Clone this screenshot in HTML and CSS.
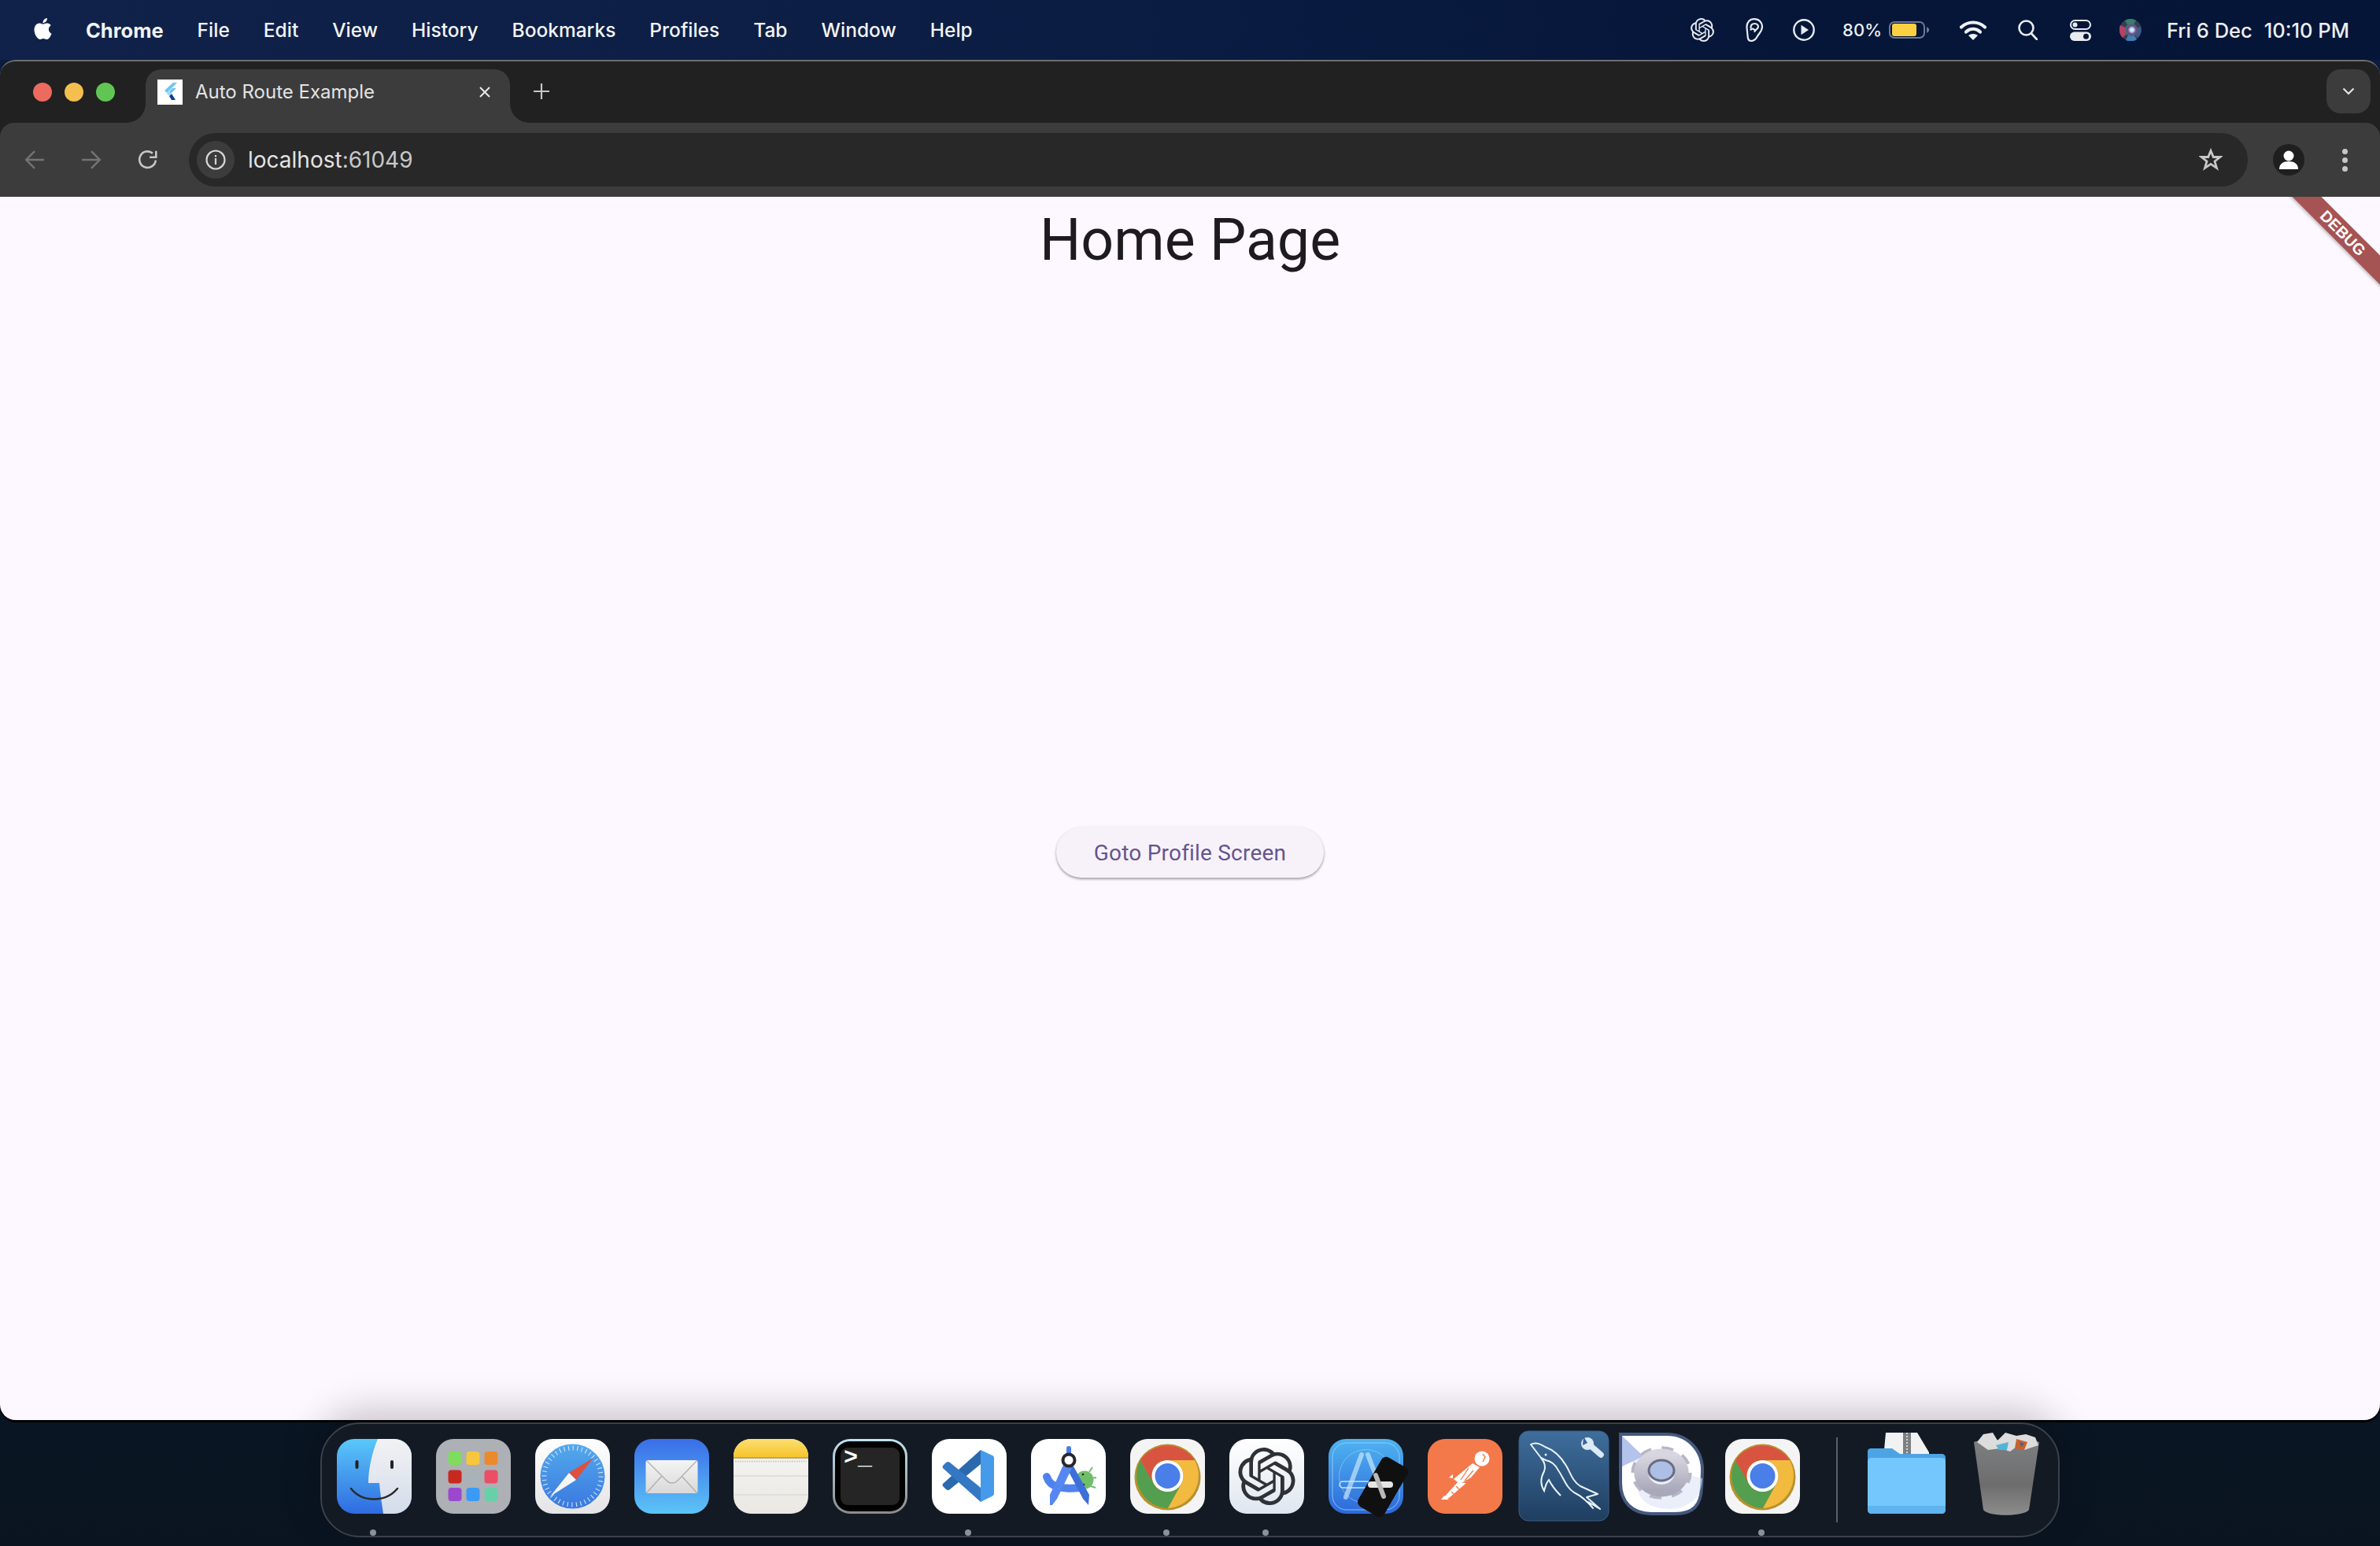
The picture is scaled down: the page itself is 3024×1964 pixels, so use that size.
FILE: index.html
```html
<!DOCTYPE html>
<html lang="en">
<head>
<meta charset="utf-8">
<title>Auto Route Example</title>
<link rel="stylesheet" href="styles.css">
</head>
<body>
<svg class="defs" width="0" height="0" aria-hidden="true">
  <defs>
    <path id="openai" d="M22.2819 9.8211a5.9847 5.9847 0 0 0-.5157-4.9108 6.0462 6.0462 0 0 0-6.5098-2.9A6.0651 6.0651 0 0 0 4.9807 4.1818a5.9847 5.9847 0 0 0-3.9977 2.9 6.0462 6.0462 0 0 0 .7427 7.0966 5.98 5.98 0 0 0 .511 4.9107 6.051 6.051 0 0 0 6.5146 2.9001A5.9847 5.9847 0 0 0 13.2599 24a6.0557 6.0557 0 0 0 5.7718-4.2058 5.9894 5.9894 0 0 0 3.9977-2.9001 6.0557 6.0557 0 0 0-.7475-7.0729zm-9.022 12.6081a4.4755 4.4755 0 0 1-2.8764-1.0408l.1419-.0804 4.7783-2.7582a.7948.7948 0 0 0 .3927-.6813v-6.7369l2.02 1.1686a.071.071 0 0 1 .038.052v5.5826a4.504 4.504 0 0 1-4.4945 4.4944zm-9.6607-4.1254a4.4708 4.4708 0 0 1-.5346-3.0137l.142.0852 4.783 2.7582a.7712.7712 0 0 0 .7806 0l5.8428-3.3685v2.3324a.0804.0804 0 0 1-.0332.0615L9.74 19.9502a4.4992 4.4992 0 0 1-6.1408-1.6464zM2.3408 7.8956a4.485 4.485 0 0 1 2.3655-1.9728V11.6a.7664.7664 0 0 0 .3879.6765l5.8144 3.3543-2.0201 1.1685a.0757.0757 0 0 1-.071 0l-4.8303-2.7865A4.504 4.504 0 0 1 2.3408 7.872zm16.5963 3.8558L13.1038 8.364 15.1192 7.2a.0757.0757 0 0 1 .071 0l4.8303 2.7913a4.4944 4.4944 0 0 1-.6765 8.1042v-5.6772a.79.79 0 0 0-.407-.667zm2.0107-3.0231l-.142-.0852-4.7735-2.7818a.7759.7759 0 0 0-.7854 0L9.409 9.2297V6.8974a.0662.0662 0 0 1 .0284-.0615l4.8303-2.7866a4.4992 4.4992 0 0 1 6.6802 4.66zM8.3065 12.863l-2.02-1.1638a.0804.0804 0 0 1-.038-.0567V6.0742a4.4992 4.4992 0 0 1 7.3757-3.4537l-.142.0805L8.704 5.459a.7948.7948 0 0 0-.3927.6813zm1.0976-2.3654l2.602-1.4998 2.6069 1.4998v2.9994l-2.5974 1.4997-2.6067-1.4997Z"/>
    <g id="chrome-mark">
      <rect width="95" height="95" rx="22" fill="#f4f4f4"/>
      <circle cx="47.5" cy="48.5" r="42" fill="#b9912c"/>
      <path d="M13 27A41.500 41.500 0 0 0 48 88L65 57A20 20 0 0 1 29 55Z" fill="#549e50"/>
      <path d="M13 27A41.500 41.500 0 0 1 82 27H47.500A20 20 0 0 0 29 55Z" fill="#d85440"/>
      <path d="M82 27A41.500 41.500 0 0 1 48 88L65 57A20 20 0 0 0 47.500 27Z" fill="#f3ba40"/>
      <circle cx="47.500" cy="47" r="20" fill="#fff"/>
      <circle cx="47.500" cy="47" r="16" fill="#4a7ee8"/>
    </g>
    <linearGradient id="finder-blue" x1="0" y1="0" x2="0" y2="1"><stop offset="0" stop-color="#5ac8fa"/><stop offset="1" stop-color="#2f6be0"/></linearGradient>
    <linearGradient id="finder-light" x1="0" y1="0" x2="0" y2="1"><stop offset="0" stop-color="#f2f2f4"/><stop offset="1" stop-color="#d3dcea"/></linearGradient>
    <linearGradient id="mail-bg" x1="0" y1="0" x2="0" y2="1"><stop offset="0" stop-color="#3a6de8"/><stop offset="1" stop-color="#5cc4f7"/></linearGradient>
    <linearGradient id="mail-env" x1="0" y1="0" x2="0" y2="1"><stop offset="0" stop-color="#f4f4f3"/><stop offset="1" stop-color="#d9d9da"/></linearGradient>
    <linearGradient id="safari-bg" x1="0" y1="0" x2="0" y2="1"><stop offset="0" stop-color="#fff"/><stop offset="1" stop-color="#e4e4e6"/></linearGradient>
    <linearGradient id="safari-dial" x1="0" y1="0" x2="0" y2="1"><stop offset="0" stop-color="#53a9ec"/><stop offset="1" stop-color="#3a78df"/></linearGradient>
    <linearGradient id="notes-top" x1="0" y1="0" x2="0" y2="1"><stop offset="0" stop-color="#fbdf72"/><stop offset="1" stop-color="#f7c42c"/></linearGradient>
    <linearGradient id="notes-body" x1="0" y1="0" x2="0" y2="1"><stop offset="0" stop-color="#f7f6f3"/><stop offset="1" stop-color="#e9e8e3"/></linearGradient>
    <linearGradient id="term-rim" x1="0" y1="0" x2="0" y2="1"><stop offset="0" stop-color="#bfe3ef"/><stop offset="1" stop-color="#8b8b8b"/></linearGradient>
    <linearGradient id="oai-bg" x1="0" y1="0" x2="0" y2="1"><stop offset="0" stop-color="#fff"/><stop offset="1" stop-color="#dfe6f0"/></linearGradient>
    <linearGradient id="xc-bg" x1="0" y1="0" x2="0" y2="1"><stop offset="0" stop-color="#4fb3f1"/><stop offset="1" stop-color="#2d69da"/></linearGradient>
    <linearGradient id="sql-bg" x1="0" y1="0" x2="0" y2="1"><stop offset="0" stop-color="#3f6e9d"/><stop offset="1" stop-color="#1f3e60"/></linearGradient>
    <linearGradient id="trash-bg" x1="0" y1="0" x2="0" y2="1"><stop offset="0" stop-color="#7d7f80"/><stop offset=".6" stop-color="#6d6d6e"/><stop offset="1" stop-color="#8d8d8d"/></linearGradient>
    <linearGradient id="gear-bg" x1="0" y1="0" x2="0" y2="1"><stop offset="0" stop-color="#d8d7e0"/><stop offset="1" stop-color="#a9a8ba"/></linearGradient>
    <radialGradient id="siri-glow" cx=".55" cy=".5" r=".55"><stop offset="0" stop-color="#fff"/><stop offset=".3" stop-color="#9fd8e8"/><stop offset=".6" stop-color="#7b3f86"/><stop offset="1" stop-color="#2d7f7a"/></radialGradient>
  </defs>
</svg>

<header class="menubar">
  <svg class="apple" viewBox="0 0 24 24"><path fill="#fff" d="M12.152 6.896c-.948 0-2.415-1.078-3.96-1.04-2.04.027-3.91 1.183-4.961 3.014-2.117 3.675-.546 9.103 1.519 12.09 1.013 1.454 2.208 3.09 3.792 3.039 1.52-.065 2.09-.987 3.935-.987 1.831 0 2.35.987 3.96.948 1.637-.026 2.676-1.48 3.676-2.948 1.156-1.688 1.636-3.325 1.662-3.415-.039-.013-3.182-1.221-3.22-4.857-.026-3.04 2.48-4.494 2.597-4.559-1.429-2.09-3.623-2.324-4.39-2.376-2-.156-3.675 1.09-4.61 1.09zM15.53 3.83c.843-1.012 1.4-2.427 1.245-3.83-1.207.052-2.662.805-3.532 1.818-.78.896-1.454 2.338-1.273 3.714 1.338.104 2.715-.688 3.559-1.701"/></svg>
  <nav class="menu">
    <span class="menu-app">Chrome</span><span>File</span><span>Edit</span><span>View</span><span>History</span><span>Bookmarks</span><span>Profiles</span><span>Tab</span><span>Window</span><span>Help</span>
  </nav>
  <div class="status">
    <svg class="st-openai" viewBox="0 0 24 24"><use href="#openai" fill="#e8ebf0"/></svg>
    <svg class="st-ear" viewBox="0 0 22 30" fill="none" stroke="#e8ebf0" stroke-width="2.200" stroke-linecap="round"><path d="M1.500 12C1 5 5.500 1.100 11 1.100 17 1.100 21 5.500 21 11 21 17 17 19 15 23 13 27 10.500 29 7 29 4 29 2.500 26 2.500 22Z"/><path d="M6.500 12c0-3 2-5 5-5s4.500 2 4.500 4c0 3-3.500 3-4.500 6M6.500 14.500c2-1.500 5-1 5 1.500"/></svg>
    <svg class="st-play" viewBox="0 0 28 28"><circle cx="14" cy="14" r="12.700" fill="none" stroke="#e8ebf0" stroke-width="2.400"/><path d="M10.500 7.800 20 14l-9.500 6.200Z" fill="#e8ebf0"/></svg>
    <span class="st-pct">80%</span>
    <svg class="st-batt" viewBox="0 0 52 22"><rect x="1" y="1" width="44" height="20" rx="6" fill="none" stroke="#6d7993" stroke-width="2"/><rect x="4" y="3" width="31" height="16" rx="3" fill="#fbd043"/><path d="M48 7l3 2.500v3L48 15Z" fill="#6d7993"/></svg>
    <svg class="st-wifi" viewBox="0 0 34 25"><path d="M2 8.500C10.500 0.500 23.500 0.500 32 8.500" fill="none" stroke="#eef0f3" stroke-width="4.200" stroke-linecap="round"/><path d="M8 14.500c5.500-4.800 12.500-4.800 18 0" fill="none" stroke="#eef0f3" stroke-width="4.200" stroke-linecap="round"/><path d="M17 25l-6-6c3.500-2.800 8.500-2.800 12 0Z" fill="#eef0f3"/></svg>
    <svg class="st-search" viewBox="0 0 25 26" fill="none" stroke="#e8ebf0" stroke-width="2.600" stroke-linecap="round"><circle cx="10.500" cy="10.500" r="9"/><path d="M17 17.500 24 25"/></svg>
    <svg class="st-ctrl" viewBox="0 0 27 27"><rect x="1" y="1" width="25" height="11" rx="5.500" fill="none" stroke="#e8ebf0" stroke-width="2"/><circle cx="6.500" cy="6.500" r="3" fill="#e8ebf0"/><rect y="15.500" width="27" height="11.500" rx="5.700" fill="#e8ebf0"/><circle cx="20.500" cy="21.200" r="3.500" fill="#06163a"/></svg>
    <svg class="st-siri" viewBox="0 0 28 28"><circle cx="14" cy="14" r="14" fill="#333f52"/><path d="M14 14 1 8a14 14 0 0 0 3 16Z" fill="#b34263"/><path d="M14 14 8 27a14 14 0 0 0 14-1Z" fill="#3f7fb4"/><path d="M14 14 7 2a14 14 0 0 1 14 0Z" fill="#3a7d6e"/><path d="M14 14 27 10a14 14 0 0 1-4 14Z" fill="#3d5a8c"/><circle cx="15" cy="14" r="8" fill="url(#siri-glow)"/></svg>
    <time class="st-clock"><span>Fri 6 Dec</span><span>10:10 PM</span></time>
  </div>
</header>

<section class="window">
  <div class="tabstrip">
    <div class="lights"><i class="light red"></i><i class="light amber"></i><i class="light green"></i></div>
    <div class="tab">
      <svg class="favicon" viewBox="0 0 32 32"><rect width="32" height="32" fill="#fff"/><path d="M20 4h5L12 17l-3-3Z" fill="#6cc4f5"/><path d="M12 18l7-7h5L15 20Z" fill="#6cc4f5"/><path d="M15 21l3-3 5 8h-5Z" fill="#0b3d91"/><path d="M12 18l3-3 3 3-3 3Z" fill="#9fd8f8"/></svg>
      <span class="tab-title">Auto Route Example</span>
      <svg class="tab-close" viewBox="0 0 16 16" fill="none" stroke="#e3e3e3" stroke-width="2.200"><path d="M2 2l12 12M14 2 2 14"/></svg>
    </div>
    <svg class="new-tab" viewBox="0 0 20 20" fill="none" stroke="#c7c7c7" stroke-width="2.200"><path d="M10 0v20M0 10h20"/></svg>
    <button class="tab-search" type="button" aria-label="Search tabs"><svg viewBox="0 0 16 10" fill="none" stroke="#e3e3e3" stroke-width="2.200"><path d="M1.500 1.500 8 8l6.500-6.500"/></svg></button>
  </div>
  <div class="toolbar">
    <div class="nav">
      <span class="nav-btn"><svg viewBox="0 0 24 24" fill="none" stroke="#747474" stroke-width="2.200"><path d="M23 12H2M12 2 2 12l10 10"/></svg></span>
      <span class="nav-btn"><svg viewBox="0 0 24 24" fill="none" stroke="#747474" stroke-width="2.200"><path d="M1 12h21M12 2l10 10-10 10"/></svg></span>
      <span class="nav-btn"><svg viewBox="0 0 24 24" fill="none" stroke="#c7c7c7" stroke-width="2.400"><path d="M21 12.500A9.500 9.500 0 1 1 17.500 4.300"/><path d="M21.500 1.500v7.500H14" /></svg></span>
    </div>
    <div class="address">
      <span class="info"><svg viewBox="0 0 26 26"><circle cx="13" cy="13" r="11.500" fill="none" stroke="#d6d6d6" stroke-width="2.200"/><rect x="11.900" y="11" width="2.200" height="8" fill="#d6d6d6"/><rect x="11.900" y="7" width="2.200" height="2.400" fill="#d6d6d6"/></svg></span>
      <span class="url">localhost<span class="url-port">:61049</span></span>
      <svg class="star" viewBox="0 0 30 30" fill="none" stroke="#c7c7c7" stroke-width="2.800" stroke-linejoin="miter"><path d="M15 3.500l3.300 8h8.500l-6.800 5.400 2.500 8.500L15 20.400l-7.500 5 2.500-8.500-6.800-5.400h8.500Z"/></svg>
    </div>
    <span class="avatar"><svg viewBox="0 0 40 40"><circle cx="20" cy="20" r="20" fill="#1f1f1f"/><circle cx="20" cy="15" r="6.500" fill="#fff"/><path d="M8 32c0-7 5-10 12-10s12 3 12 10Z" fill="#fff"/></svg></span>
    <span class="kebab"><i></i><i></i><i></i></span>
  </div>
  <main class="content">
    <div class="appbar"><h1 class="page-title">Home Page</h1></div>
    <div class="page-body"><button class="elevated" type="button">Goto Profile Screen</button></div>
    <div class="debug-banner"><span>DEBUG</span></div>
  </main>
</section>

<footer class="dock">
  <div class="dock-item"><svg class="ic" viewBox="0 0 95 95"><rect width="95" height="95" rx="22" fill="url(#finder-blue)"/><path d="M52 0H73A22 22 0 0 1 95 22V73A22 22 0 0 1 73 95H59C57 82 55 68 54 56H40C40 36 46 14 52 0Z" fill="url(#finder-light)"/><rect x="23.500" y="27" width="4" height="11" rx="2" fill="#222"/><rect x="68" y="27" width="4" height="11" rx="2" fill="#222"/><path d="M18 63C32 81 62 81 77 63" fill="none" stroke="#2a2a2a" stroke-width="2.500" stroke-linecap="round"/></svg><i class="dot"></i></div>

  <div class="dock-item"><svg class="ic" viewBox="0 0 95 95"><rect width="95" height="95" rx="22" fill="#adb0b5"/><rect x="15.500" y="16" width="17" height="17" rx="4" fill="#7fdc5c"/><rect x="38.500" y="16" width="17" height="17" rx="4" fill="#f8c63c"/><rect x="61.500" y="16" width="17" height="17" rx="4" fill="#ea8a2c"/><rect x="15.500" y="39.500" width="17" height="17" rx="4" fill="#c8291e"/><rect x="38.500" y="39.500" width="17" height="17" rx="4" fill="#a9b2b8"/><rect x="61.500" y="39.500" width="17" height="17" rx="4" fill="#ea4f66"/><rect x="15.500" y="62" width="17" height="17" rx="4" fill="#9b48cf"/><rect x="38.500" y="62" width="17" height="17" rx="4" fill="#3a9af5"/><rect x="61.500" y="62" width="17" height="17" rx="4" fill="#68d0a8"/></svg></div>

  <div class="dock-item"><svg class="ic" viewBox="0 0 95 95"><rect width="95" height="95" rx="22" fill="url(#safari-bg)"/><circle cx="47.500" cy="47.500" r="41" fill="url(#safari-dial)"/><circle cx="47.500" cy="47.500" r="36" fill="none" stroke="#d8ecfb" stroke-width="6" stroke-dasharray="1.200 4.450" opacity=".85"/><path d="M43 43 74 24 52 52Z" fill="#e04e3c"/><path d="M43 43 52 52 19 73Z" fill="#f5f5f5"/></svg></div>

  <div class="dock-item"><svg class="ic" viewBox="0 0 95 95"><rect width="95" height="95" rx="22" fill="url(#mail-bg)"/><rect x="14.500" y="27" width="66" height="42" rx="3" fill="url(#mail-env)"/><path d="M16 28 41 53c4 4 10 4 14 0L79 28M16 68 35 47M79 68 60 47" fill="none" stroke="#b0b0b2" stroke-width="1.400"/></svg></div>

  <div class="dock-item"><svg class="ic" viewBox="0 0 95 95"><defs><clipPath id="notes-clip"><rect width="95" height="95" rx="22"/></clipPath></defs><g clip-path="url(#notes-clip)"><rect width="95" height="95" fill="url(#notes-body)"/><rect width="95" height="23" fill="url(#notes-top)"/><rect y="23" width="95" height="2" fill="#b5a77a"/><path d="M2 28.500H93" stroke="#c9c7c2" stroke-width="2" stroke-dasharray="1.500 1.500"/><path d="M0 47H95M0 71H95" stroke="#dbdad5" stroke-width="1.500"/></g></svg></div>

  <div class="dock-item"><svg class="ic" viewBox="0 0 95 95"><rect width="95" height="95" rx="22" fill="url(#term-rim)"/><rect x="3" y="3" width="89" height="89" rx="19" fill="#020202"/><rect x="10" y="11" width="75" height="73" rx="9" fill="#252525"/><text class="term-text" x="14" y="32">&gt;_</text></svg></div>

  <div class="dock-item"><svg class="ic" viewBox="0 0 95 95"><rect width="95" height="95" rx="22" fill="#fff"/><path d="M62 14 15 56c-2 2-2 3 0 5l3 3c2 1.500 3 1.500 5 0l39-32Z" fill="#2b69ae"/><path d="M62 62 23 30c-2-1.500-3-1.500-5 0l-3 3c-2 2-2 3 0 5l47 42Z" fill="#3478c3"/><path d="M62 14 77 21c1.500 1 2 2 2 3.500V69c0 1.500-.5 2.500-2 3.500L62 80Z" fill="#459be9"/></svg><i class="dot"></i></div>

  <div class="dock-item"><svg class="ic" viewBox="0 0 95 95"><rect width="95" height="95" rx="22" fill="#fff"/><path d="M74 42l4-6M77 50l6-1M76 60l6 2" stroke="#6fbf6a" stroke-width="2"/><circle cx="68" cy="52" r="11.500" fill="#6fbf6a"/><circle cx="66" cy="45" r="1.300" fill="#222"/><circle cx="67" cy="58" r="1.300" fill="#222"/><path d="M20 48C24 62 40 64 62 62" fill="none" stroke="#4f82ec" stroke-width="10" stroke-linecap="round"/><path d="M45 36 53 33 74 71 73 84 66 76Z" fill="#3e6fd8"/><path d="M41 33 52 37 33 76 27 84 24 84 24 71Z" fill="#5587f0"/><rect x="45" y="9" width="6" height="14" rx="3" fill="#4a7ee8"/><circle cx="48" cy="27" r="7.500" fill="#fff" stroke="#27272b" stroke-width="4"/></svg></div>

  <div class="dock-item"><svg class="ic" viewBox="0 0 95 95"><use href="#chrome-mark"/></svg><i class="dot"></i></div>

  <div class="dock-item"><svg class="ic" viewBox="0 0 95 95"><rect width="95" height="95" rx="22" fill="url(#oai-bg)"/><svg x="11" y="11" width="73" height="73" viewBox="0 0 24 24"><use href="#openai" fill="#2e3236"/></svg></svg><i class="dot"></i></div>

  <div class="dock-item"><svg class="ic" viewBox="0 0 95 95"><rect width="95" height="95" rx="22" fill="url(#xc-bg)"/><rect x="5" y="5" width="85" height="85" rx="18" fill="none" stroke="#9ed4f7" stroke-width=".8"/><circle cx="47.500" cy="47.500" r="34" fill="none" stroke="#9ed4f7" stroke-width=".6"/><path d="M42 20 22 74M50 20l19 50" fill="none" stroke="#c6e6fb" stroke-width="6" stroke-linecap="round" opacity=".7"/><rect x="14" y="54" width="50" height="8" rx="4" fill="none" stroke="#c6e6fb" stroke-width="1.500"/><rect x="50" y="25" width="38" height="72" rx="7" fill="#101010" transform="rotate(30 69 61)"/><rect x="50" y="54" width="32" height="8" rx="4" fill="#e6e6e6"/><path d="M60 46 70 73" stroke="#b9b9b9" stroke-width="6" stroke-linecap="round"/></svg></div>

  <div class="dock-item"><svg class="ic" viewBox="0 0 95 95"><rect width="95" height="95" rx="22" fill="#f3794a"/><circle cx="69" cy="25" r="9.500" fill="#fff"/><path d="M70 19l3 4-3 6" fill="none" stroke="#f3794a" stroke-width="1.500"/><path d="M57 31 66 36 55 49 41 57 33 51Z" fill="#fff"/><path d="M52 37 42 52M58 40 47 53" stroke="#f3794a" stroke-width="1.300"/><path d="M49 56 27 75 19 76 38 55Z" fill="#fff"/><path d="M36 60l5 5M30 67l4 4" stroke="#f3794a" stroke-width="1.300"/><path d="M21 72l6 5H17Z" fill="#fff"/><path d="M32 50l-5-1 5-4Z" fill="#fff"/></svg></div>

  <div class="dock-item"><svg class="ic" viewBox="0 0 95 95"><rect x="-10" y="-10" width="114" height="114" rx="12" fill="url(#sql-bg)" stroke="#3a5f86" stroke-width="1"/><path d="M5 7C12 3 20 8 23 10 34 14 43 22 50 34 55 42 58 54 68 60L90 70 76 74 93 89 78 80 84 88C76 78 68 72 60 68 50 62 47 50 40 40 36 32 30 28 24 27L18 24 5 7Z" fill="none" stroke="#e9f2f8" stroke-width="2" stroke-linejoin="round"/><path d="M18 24C23 30 24 36 22 41 17 50 17 58 22 66 24 58 26 54 28 52 32 60 37 66 43 72" fill="none" stroke="#e9f2f8" stroke-width="2"/><circle cx="24" cy="20" r="1.500" fill="#e9f2f8"/><path d="M79 7 94 20" fill="none" stroke="#dbeaf5" stroke-width="7.500" stroke-linecap="round"/><circle cx="77" cy="6" r="8" fill="#dbeaf5"/><path d="M72-3 77 5 71 8Z" fill="#3a6592"/></svg></div>

  <div class="dock-item"><svg class="ic" viewBox="0 0 95 95"><path d="M-7-6H52C78-6 98 14 97 42L96 62C95 84 86 95 62 95H32C8 95-7 80-7 56Z" fill="#fff" stroke="#45587e" stroke-width="4"/><path d="M-5-2 26 33 97 50C96 68 90 84 60 89 20 90 10 70 15 45Z" fill="#dde5f7" opacity=".6"/><path d="M-5-4V35L22 22Z" fill="#b3c3ec"/><g transform="translate(45 43) scale(1.120 .980)"><circle r="29" fill="none" stroke="#b7b6c6" stroke-width="11" stroke-dasharray="12 10.780"/><circle r="23" fill="none" stroke="url(#gear-bg)" stroke-width="16"/></g><ellipse cx="45" cy="40" rx="16" ry="13" fill="#aebfe6" stroke="#6b6c82" stroke-width="3"/></svg></div>

  <div class="dock-item"><svg class="ic" viewBox="0 0 95 95"><use href="#chrome-mark"/></svg><i class="dot"></i></div>

  <span class="dock-sep"></span>

  <div class="dock-item"><svg class="ic" viewBox="0 0 95 95"><path d="M20-8H60L75 17V25H17Z" fill="#f2f2f2"/><rect x="42" y="-8" width="10" height="36" fill="#7d7f82"/><path d="M47-8V28" stroke="#d4d5d6" stroke-width="2" stroke-dasharray="2 2"/><path d="M-3 16C-3 13-1 12 2 12H28L38 19H91C94 19 96 21 96 24V40H-3Z" fill="#4ca4e4"/><rect x="-3" y="24" width="99" height="71" rx="5" fill="#74c7fc"/><path d="M-3 85H96V90C96 93 94 95 91 95H2C-1 95-3 93-3 90Z" fill="#5fb4ee"/></svg></div>

  <div class="dock-item"><svg class="ic" viewBox="0 0 95 95"><path d="M6 4C14 0 80 0 89 4L76 90C70 99 24 99 18 90Z" fill="url(#trash-bg)"/><path d="M10 4 18-6 30-8 36 2 46-8 60-4 72-6 84-2 88 8 70 14 60 10 52 16 40 12 24 14Z" fill="#dcdcdc"/><path d="M34 8 50 4 48 14 38 14Z" fill="#4fb6d8"/><path d="M60 0 74 4 70 14 58 12Z" fill="#c9612c"/><path d="M64 4 70 6 66 10Z" fill="#2f68a8"/></svg></div>
</footer>
</body>
</html>
```
FILE: styles.css
```css
* { box-sizing: border-box; }

html, body { margin: 0; height: 100%; }

body {
  width: 3024px;
  height: 1964px;
  overflow: hidden;
  background: linear-gradient(180deg, #0b1c3e 0, #0a1626 1700px, #0a1420 100%);
  font-family: Inter, "Liberation Sans", sans-serif;
}

.defs { display: block; height: 0; }

/* ---------- menu bar ---------- */
.menubar {
  height: 76px;
  display: flex;
  align-items: center;
  padding: 0 34px 0 41px;
  background: linear-gradient(90deg, #10224a 0, #0c1d44 45%, #051639 75%, #041537 100%);
  color: #f3f4f6;
  font-size: 24.500px;
  font-weight: 500;
}

.apple { width: 27px; height: 31px; margin-top: -4px; flex: none; }

.menu { display: flex; gap: 43px; margin-left: 41px; }
.menu-app { font-size: 25.500px; font-weight: 700; }

.status { margin-left: auto; display: flex; align-items: center; color: #eceef2; }
.st-openai { width: 30px; height: 30px; }
.st-ear { width: 22px; height: 30px; margin-left: 40px; }
.st-play { width: 28px; height: 28px; margin-left: 38px; }
.st-pct { font-size: 22px; margin-left: 35px; }
.st-batt { width: 52px; height: 22px; margin-left: 9px; }
.st-wifi { width: 34px; height: 25px; margin-left: 38px; }
.st-search { width: 25px; height: 26px; margin-left: 40px; }
.st-ctrl { width: 27px; height: 27px; margin-left: 41px; }
.st-siri { width: 28px; height: 28px; margin-left: 36px; }
.st-clock { display: flex; gap: 15px; width: 237px; margin-left: 32px; font-size: 25.500px; white-space: nowrap; }

/* ---------- browser window ---------- */
.window {
  height: 1728px;
  display: flex;
  flex-direction: column;
  overflow: hidden;
  background: #202120;
  border-top: 2px solid #6f6f6f;
  border-radius: 20px;
  box-shadow: 0 3px 0 #000;
}

.tabstrip {
  height: 78px;
  flex: none;
  display: flex;
  align-items: flex-start;
  padding: 10px 12px 0 42px;
}

.lights { display: flex; gap: 16px; padding-top: 17px; }
.light { width: 24px; height: 24px; border-radius: 50%; }
.red { background: #ed6a5e; }
.amber { background: #f4bf4f; }
.green { background: #61c554; }

.tab {
  position: relative;
  width: 463px;
  height: 68px;
  margin-left: 39px;
  padding: 0 24px 11px 15px;
  display: flex;
  align-items: center;
  background: #3c3c3c;
  border-radius: 20px 20px 0 0;
}

.tab::before,
.tab::after {
  content: "";
  position: absolute;
  bottom: 0;
  width: 24px;
  height: 24px;
}
.tab::before { left: -24px; background: radial-gradient(circle at 0 0, #202120 23.500px, #3c3c3c 24px); }
.tab::after { right: -24px; background: radial-gradient(circle at 100% 0, #202120 23.500px, #3c3c3c 24px); }

.favicon { width: 32px; height: 32px; flex: none; }
.tab-title { margin-left: 16px; font-size: 24px; color: #e3e3e3; flex: 1; white-space: nowrap; }
.tab-close { width: 16px; height: 16px; flex: none; }
.new-tab { width: 20px; height: 20px; margin: 18px 0 0 30px; flex: none; }

.tab-search {
  width: 56px;
  height: 56px;
  margin-left: auto;
  padding: 0;
  border: 0;
  border-radius: 18px;
  background: #3c3c3c;
  display: flex;
  align-items: center;
  justify-content: center;
}
.tab-search svg { width: 16px; height: 10px; }

.toolbar {
  height: 94px;
  flex: none;
  display: flex;
  align-items: center;
  padding: 0 0 0 8px;
  background: #3c3c3c;
  border-radius: 18px 18px 0 0;
}

.nav { display: flex; flex: none; }
.nav-btn { width: 72px; height: 48px; display: flex; align-items: center; justify-content: center; }
.nav-btn svg { width: 26px; height: 26px; }

.address {
  width: 2616px;
  height: 68px;
  margin-left: 16px;
  padding: 0 32px 0 10px;
  display: flex;
  align-items: center;
  flex: none;
  background: #282828;
  border-radius: 34px;
}

.info { width: 48px; height: 48px; border-radius: 50%; background: #3c3c3c; display: flex; align-items: center; justify-content: center; flex: none; }
.info svg { width: 26px; height: 26px; }
.url { margin-left: 17px; font-size: 28px; color: #e3e3e3; flex: 1; }
.url-port { color: #c8c8c8; }
.star { width: 30px; height: 30px; flex: none; }

.avatar { width: 40px; height: 40px; margin-left: 32px; flex: none; }
.avatar svg { display: block; width: 40px; height: 40px; }

.kebab { display: flex; flex-direction: column; gap: 4px; margin-left: 48px; flex: none; }
.kebab i { width: 7px; height: 7px; border-radius: 50%; background: #c7c7c7; }

/* ---------- flutter page ---------- */
.content {
  position: relative;
  flex: 1;
  display: flex;
  flex-direction: column;
  overflow: hidden;
  background: #fdf8ff;
  font-family: Roboto, sans-serif;
}

.appbar { height: 112px; flex: none; display: flex; align-items: center; justify-content: center; }
.page-title { margin: 0; font-size: 73.500px; font-weight: 400; color: #1d1b20; line-height: 1; }

.page-body { flex: 1; display: flex; align-items: center; justify-content: center; }

.elevated {
  width: 340px;
  height: 64px;
  padding: 0;
  border: 0;
  border-radius: 32px;
  background: #f7f2fa;
  box-shadow: 0 2px 3px rgba(0, 0, 0, .3), 0 1px 4px rgba(0, 0, 0, .1);
  color: #65558f;
  font: 400 28px Roboto, sans-serif;
  letter-spacing: .2px;
}

.debug-banner {
  position: absolute;
  top: 33px;
  right: -103px;
  width: 300px;
  height: 26px;
  display: flex;
  align-items: center;
  justify-content: center;
  transform: rotate(45deg);
  background: #a65353;
  box-shadow: 0 2px 4px rgba(0, 0, 0, .25);
  color: #fff;
  font: 700 20px "Liberation Sans", sans-serif;
}

/* ---------- dock ---------- */
.dock {
  position: relative;
  z-index: 1;
  width: 2210px;
  height: 146px;
  margin: 3px 0 0 407px;
  padding: 19px 19px 0;
  display: flex;
  align-items: flex-start;
  gap: 31px;
  background: #131a24;
  border: 2px solid #3b4049;
  border-radius: 50px;
  box-shadow: 0 -14px 50px rgba(0, 0, 0, .22);
}

.dock-item { width: 95px; flex: none; display: flex; flex-direction: column; align-items: center; }
.ic { display: block; width: 95px; height: 95px; overflow: visible; }
.dot { width: 8px; height: 8px; margin: 20px 3px 0 0; border-radius: 50%; background: #8a919d; }

.dock-sep { width: 2px; height: 108px; flex: none; margin: -2px 10px 0 15px; background: #5a5f68; }

.term-text { font: 700 30px "Liberation Mono", monospace; fill: #fff; }
```
